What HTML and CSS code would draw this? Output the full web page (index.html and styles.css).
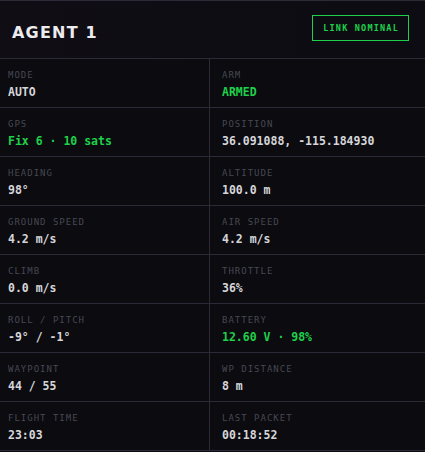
FILE: index.html
```html
<!DOCTYPE html>
<html lang="en">
<head>
  <meta charset="UTF-8" />
  <meta name="viewport" content="width=device-width, initial-scale=1.0"/>
  <title>Agent 1</title>
  <link rel="stylesheet" href="styles.css">
</head>
<body>
  <div class="panel">
    <div class="panel-header">
      <h1 class="agent-name">AGENT 1</h1>
      <span class="link-badge">LINK NOMINAL</span>
    </div>

    <div class="stats">
      <div class="stat">
        <div class="stat-label">MODE</div>
        <div class="stat-value">AUTO</div>
      </div>
      <div class="stat">
        <div class="stat-label">ARM</div>
        <div class="stat-value ok">ARMED</div>
      </div>
      <div class="stat">
        <div class="stat-label">GPS</div>
        <div class="stat-value ok">Fix 6 · 10 sats</div>
      </div>
      <div class="stat">
        <div class="stat-label">POSITION</div>
        <div class="stat-value">36.091088, -115.184930</div>
      </div>
      <div class="stat">
        <div class="stat-label">HEADING</div>
        <div class="stat-value">98°</div>
      </div>
      <div class="stat">
        <div class="stat-label">ALTITUDE</div>
        <div class="stat-value">100.0 m</div>
      </div>
      <div class="stat">
        <div class="stat-label">GROUND SPEED</div>
        <div class="stat-value">4.2 m/s</div>
      </div>
      <div class="stat">
        <div class="stat-label">AIR SPEED</div>
        <div class="stat-value">4.2 m/s</div>
      </div>
      <div class="stat">
        <div class="stat-label">CLIMB</div>
        <div class="stat-value">0.0 m/s</div>
      </div>
      <div class="stat">
        <div class="stat-label">THROTTLE</div>
        <div class="stat-value">36%</div>
      </div>
      <div class="stat">
        <div class="stat-label">ROLL / PITCH</div>
        <div class="stat-value">-9° / -1°</div>
      </div>
      <div class="stat">
        <div class="stat-label">BATTERY</div>
        <div class="stat-value ok">12.60 V · 98%</div>
      </div>
      <div class="stat">
        <div class="stat-label">WAYPOINT</div>
        <div class="stat-value">44 / 55</div>
      </div>
      <div class="stat">
        <div class="stat-label">WP DISTANCE</div>
        <div class="stat-value">8 m</div>
      </div>
      <div class="stat">
        <div class="stat-label">FLIGHT TIME</div>
        <div class="stat-value">23:03</div>
      </div>
      <div class="stat">
        <div class="stat-label">LAST PACKET</div>
        <div class="stat-value">00:18:52</div>
      </div>
    </div>
  </div>
</body>
</html>
```

FILE: styles.css
```css
body {
  margin: 0;
  background: #0b0b10;
  font-family: "DejaVu Sans Mono", monospace;
  color: #d4d4d8;
}

.panel {
  border-top: 1px solid #2b2a36;
  border-bottom: 1px solid #2b2a36;
}

.panel-header {
  display: flex;
  justify-content: space-between;
  align-items: center;
  height: 57px;
  padding: 0 16px 0 12px;
  background: linear-gradient(90deg, #100d15 0%, #0c0c12 100%);
  border-bottom: 1px solid #2b2a36;
}

.agent-name {
  margin: 5px 0 0;
  font-family: "DejaVu Sans", sans-serif;
  font-size: 16px;
  font-weight: bold;
  letter-spacing: 1.2px;
  color: #ececf0;
}

.link-badge {
  margin-top: -3px;
  padding: 7px 9px 7px 10px;
  border: 1px solid #1fd14a;
  color: #1fd14a;
  font-size: 8.5px;
  font-weight: bold;
  letter-spacing: 1.2px;
}

.stats {
  display: grid;
  grid-template-columns: 210px 1fr;
}

.stat {
  height: 49px;
  padding: 10px 8px 0;
  box-sizing: border-box;
  border-bottom: 1px solid #2b2a36;
}

.stat:nth-child(odd) {
  border-right: 1px solid #2b2a36;
}

.stat:nth-child(even) {
  padding-left: 12px;
}

.stat:nth-last-child(-n+2) {
  height: 48px;
  border-bottom: none;
}

.stat-label {
  font-size: 9px;
  letter-spacing: 1px;
  color: #484852;
  line-height: 12px;
}

.stat-value {
  margin-top: 3px;
  font-size: 11.5px;
  font-weight: 600;
  line-height: 16px;
  color: #d6d6da;
}

.stat-value.ok {
  color: #1fd14a;
}
```
